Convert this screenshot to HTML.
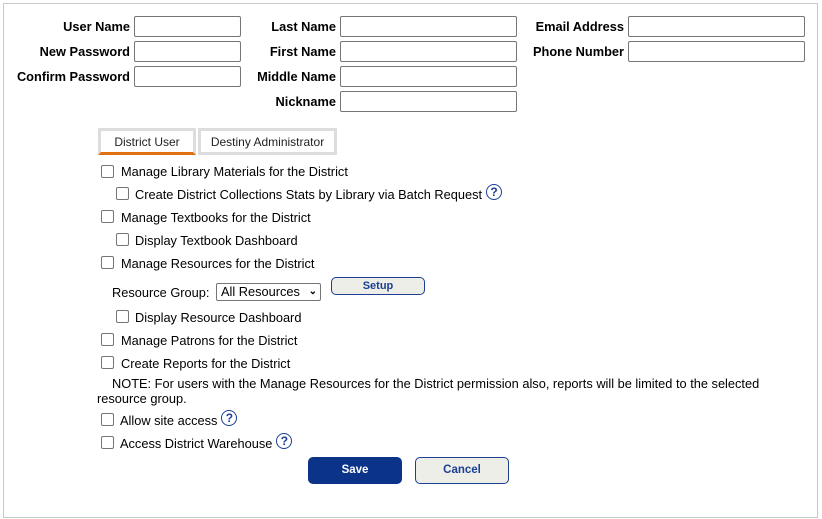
<!DOCTYPE html>
<html><head><style>
body{margin:0;width:822px;height:519px;background:#fff;font-family:"Liberation Sans",Arial,sans-serif;font-size:12.8px;color:#000;position:relative;overflow:hidden}
.box{position:absolute;left:3px;top:3px;width:813px;height:513px;border:1px solid #c8c8c8}
.a{position:absolute;white-space:nowrap;line-height:15px}
.lb{position:absolute;font-weight:bold;text-align:right;white-space:nowrap;font-size:12.8px}
.in{position:absolute;border:1px solid #767676;border-radius:2px;box-sizing:border-box;height:21px}
.cb{position:absolute;width:13px;height:13px;border:1px solid #767676;border-radius:2px;box-sizing:border-box}
.q{position:absolute;top:-3px;width:14px;height:14px;border:1.5px solid #1a3f95;border-radius:50%;color:#1a3f95;font-weight:bold;font-size:12px;line-height:14px;text-align:center;margin-left:4px}
.btn{position:absolute;box-sizing:border-box;border-radius:5px;text-align:center;font-weight:bold;font-size:11.5px}
</style></head><body>
<div class="box"></div>
<div class="lb" style="right:692px;top:19px">User Name</div>
<div class="lb" style="right:692px;top:44px">New Password</div>
<div class="lb" style="right:692px;top:69px">Confirm Password</div>
<div class="in" style="left:134px;top:16px;width:107px"></div>
<div class="in" style="left:134px;top:41px;width:107px"></div>
<div class="in" style="left:134px;top:66px;width:107px"></div>
<div class="lb" style="right:486px;top:19px">Last Name</div>
<div class="lb" style="right:486px;top:44px">First Name</div>
<div class="lb" style="right:486px;top:69px">Middle Name</div>
<div class="lb" style="right:486px;top:94px">Nickname</div>
<div class="in" style="left:340px;top:16px;width:177px"></div>
<div class="in" style="left:340px;top:41px;width:177px"></div>
<div class="in" style="left:340px;top:66px;width:177px"></div>
<div class="in" style="left:340px;top:91px;width:177px"></div>
<div class="lb" style="right:198px;top:19px">Email Address</div>
<div class="lb" style="right:198px;top:44px">Phone Number</div>
<div class="in" style="left:628px;top:16px;width:177px"></div>
<div class="in" style="left:628px;top:41px;width:177px"></div>

<div class="a" style="left:98px;top:128px;width:98px;height:27px;box-sizing:border-box;border:3px solid #ddd;border-bottom:3px solid #e07010;text-align:center;line-height:23px;font-size:12px;color:#222">District User</div>
<div class="a" style="left:198px;top:128px;width:139px;height:27px;box-sizing:border-box;border:3px solid #ddd;text-align:center;line-height:23px;font-size:12px;color:#222">Destiny Administrator</div>

<div class="cb" style="left:101px;top:165px"></div><div class="a" style="left:121px;top:164px">Manage Library Materials for the District</div>
<div class="cb" style="left:116px;top:187px"></div><div class="a" style="left:135px;top:187px">Create District Collections Stats by Library via Batch Request<span class="q">?</span></div>
<div class="cb" style="left:101px;top:210px"></div><div class="a" style="left:121px;top:210px">Manage Textbooks for the District</div>
<div class="cb" style="left:116px;top:233px"></div><div class="a" style="left:135px;top:233px">Display Textbook Dashboard</div>
<div class="cb" style="left:101px;top:256px"></div><div class="a" style="left:121px;top:256px">Manage Resources for the District</div>
<div class="a" style="left:112px;top:285px">Resource Group:</div>
<div class="a" style="left:216px;top:283px;width:105px;height:18px;box-sizing:border-box;border:1px solid #767676;border-radius:2px;padding-left:4px;line-height:16px">All Resources <span style="position:absolute;right:3px;font-size:10px;font-weight:bold">&#8964;</span></div>
<div class="btn" style="left:331px;top:277px;width:94px;height:18px;border:1px solid #1a3f95;background:#eeeee8;color:#1a3f95;line-height:16px;font-size:11px">Setup</div>
<div class="cb" style="left:116px;top:310px"></div><div class="a" style="left:135px;top:310px">Display Resource Dashboard</div>
<div class="cb" style="left:101px;top:333px"></div><div class="a" style="left:121px;top:333px">Manage Patrons for the District</div>
<div class="cb" style="left:101px;top:356px"></div><div class="a" style="left:121px;top:356px">Create Reports for the District</div>
<div class="a" style="left:112px;top:376px">NOTE: For users with the Manage Resources for the District permission also, reports will be limited to the selected</div>
<div class="a" style="left:97px;top:391px">resource group.</div>
<div class="cb" style="left:101px;top:413px"></div><div class="a" style="left:120px;top:413px">Allow site access<span class="q">?</span></div>
<div class="cb" style="left:101px;top:436px"></div><div class="a" style="left:120px;top:436px">Access District Warehouse<span class="q">?</span></div>
<div class="btn" style="left:308px;top:457px;width:94px;height:27px;background:#0b3489;color:#fff;line-height:27px">Save</div>
<div class="btn" style="left:415px;top:457px;width:94px;height:27px;border:1px solid #1a3f95;background:#eeeee8;color:#1a3f95;line-height:25px">Cancel</div>
</body></html>
